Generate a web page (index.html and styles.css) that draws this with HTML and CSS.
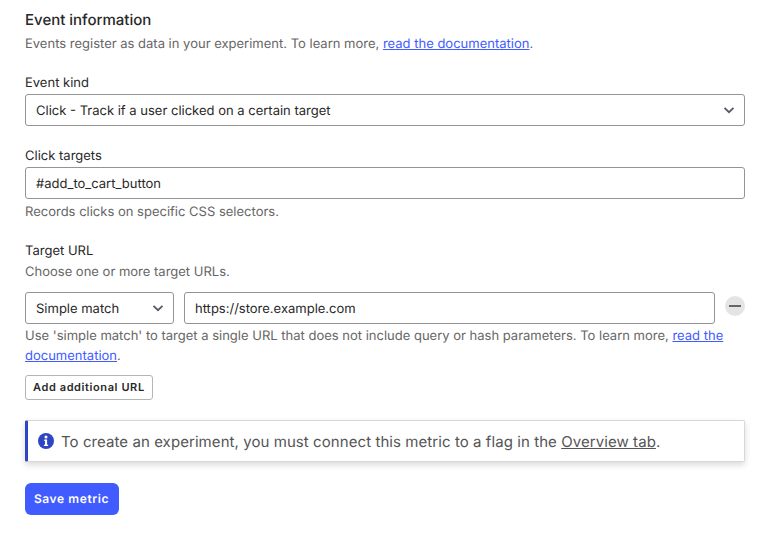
FILE: index.html
```html
<!DOCTYPE html>
<html lang="en">

    <head>
        <meta charset="UTF-8">
        <meta name="viewport" content="width=device-width, initial-scale=1.0">
        <title>Event information</title>
        <link rel="stylesheet" href="styles.css">
    </head>

    <body>
        <form class="metric-form">
            <section class="intro">
                <h2>Event information</h2>
                <p class="hint">Events register as data in your experiment. To learn more, <a href="#">read the documentation</a>.</p>
            </section>

            <div class="field field-kind">
                <label for="kind">Event kind</label>
                <div class="select-wrap">
                    <select id="kind">
                        <option>Click - Track if a user clicked on a certain target</option>
                    </select>
                    <svg class="chevron" viewBox="0 0 12 8"><path d="M1.5 1.8 6 6.2l4.500-4.400"/></svg>
                </div>
            </div>

            <div class="field field-targets">
                <label for="targets">Click targets</label>
                <input type="text" id="targets" value="#add_to_cart_button">
                <p class="hint hint-below">Records clicks on specific CSS selectors.</p>
            </div>

            <div class="field field-url">
                <label for="url">Target URL</label>
                <p class="hint hint-choose">Choose one or more target URLs.</p>
                <div class="url-row">
                    <div class="select-wrap match-select">
                        <select id="match">
                            <option>Simple match</option>
                        </select>
                        <svg class="chevron" viewBox="0 0 12 8"><path d="M1.5 1.8 6 6.2l4.500-4.400"/></svg>
                    </div>
                    <input type="text" id="url" class="url-input" value="https://store.example.com">
                    <button type="button" class="remove-button" aria-label="Remove URL"></button>
                </div>
                <p class="hint hint-url">Use 'simple match' to target a single URL that does not include query or hash parameters. To learn more, <a href="#">read the documentation</a>.</p>
                <button type="button" class="add-button">Add additional URL</button>
            </div>

            <div class="callout">
                <svg class="info-icon" viewBox="0 0 16 16">
                    <circle cx="8" cy="8" r="8" fill="#2f46c4"/>
                    <circle cx="8" cy="4.100" r="1.500" fill="#fff"/>
                    <path d="M6.200 6.500h2.900v5.200h1v1.400H5.900v-1.400h1.100V7.900h-.8z" fill="#fff"/>
                </svg>
                <span>To create an experiment, you must connect this metric to a flag in the <a href="#">Overview tab</a>.</span>
            </div>

            <button type="button" class="save-button">Save metric</button>
        </form>
    </body>

</html>
```

FILE: styles.css
```css
* {
    margin: 0;
    padding: 0;
    box-sizing: border-box;
    font-family: 'Inter', 'Liberation Sans', sans-serif;
    text-rendering: geometricPrecision;
}

body {
    background-color: #ffffff;
    color: #282828;
    font-size: 13px;
}

.metric-form {
    width: 720px;
    margin-left: 25px;
    padding-top: 11px;
}

h2 {
    font-size: 15px;
    font-weight: 500;
    line-height: 18px;
    color: #282828;
}

a {
    color: #405bff;
}

label {
    display: block;
    font-size: 13px;
    line-height: 20px;
    margin-bottom: 1px;
    color: #282828;
}

.hint {
    font-size: 13px;
    line-height: 19.5px;
    color: #666666;
}

.intro .hint {
    margin-top: 5.5px;
}

.hint-below {
    margin-top: 3.5px;
}

.hint-choose {
    margin-top: 2px;
    margin-bottom: 9.5px;
}

.hint-url {
    margin-top: 3px;
}

.field-kind {
    margin-top: 19px;
}

.field-targets {
    margin-top: 20px;
}

.field-url {
    margin-top: 19px;
}

select,
input[type="text"] {
    display: block;
    width: 100%;
    height: 32px;
    padding: 2px 10px 0;
    font-size: 13px;
    color: #282828;
    background-color: #ffffff;
    border: 1px solid #949494;
    border-radius: 3px;
    appearance: none;
    outline: none;
}

.select-wrap {
    position: relative;
}

.chevron {
    position: absolute;
    top: 12px;
    right: 10px;
    width: 12px;
    height: 8px;
    fill: none;
    stroke: #555b66;
    stroke-width: 1.800;
    pointer-events: none;
}

.url-row {
    display: flex;
    align-items: flex-start;
    gap: 10px;
}

.match-select {
    flex: 0 0 149px;
}

.url-input {
    flex: 1;
}

.remove-button {
    flex: 0 0 20px;
    position: relative;
    height: 20px;
    margin-top: 4px;
    border: none;
    border-radius: 50%;
    background-color: #e4e4e4;
}

.remove-button::before {
    content: "";
    position: absolute;
    left: 4px;
    top: 9px;
    width: 12px;
    height: 2px;
    background-color: #666666;
}

.add-button {
    display: block;
    height: 25px;
    margin-top: 9px;
    padding: 0 7px 1px;
    font-size: 11px;
    font-weight: 600;
    letter-spacing: 0.6px;
    color: #282828;
    background-color: #ffffff;
    border: 1px solid #b5b5b5;
    border-radius: 3px;
}

.callout {
    display: flex;
    align-items: center;
    gap: 7px;
    height: 42px;
    margin-top: 20px;
    padding-left: 10px;
    font-size: 15px;
    letter-spacing: 0.07px;
    color: #555555;
    background-color: #ffffff;
    border: 1px solid #d8d8d8;
    border-left: 3px solid #2f46c4;
    border-radius: 2px;
    box-shadow: 0 3px 6px rgba(0, 0, 0, 0.15);
}

.callout a {
    color: #555555;
}

.info-icon {
    width: 16px;
    height: 16px;
    flex: none;
}

.save-button {
    display: block;
    width: 94px;
    height: 32px;
    margin-top: 21px;
    padding: 0 1px 1px 0;
    font-size: 12px;
    font-weight: 600;
    letter-spacing: 0.6px;
    color: #ffffff;
    background-color: #405bff;
    border: none;
    border-radius: 6px;
}
```
